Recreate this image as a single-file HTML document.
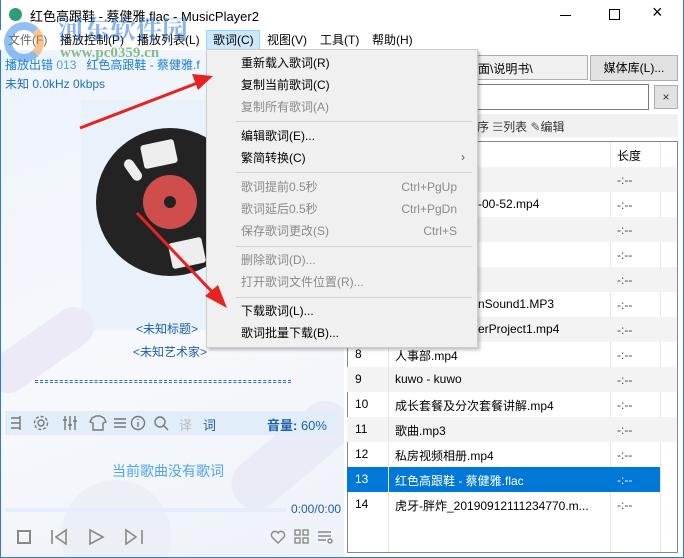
<!DOCTYPE html>
<html><head><meta charset="utf-8"><style>
*{margin:0;padding:0;box-sizing:border-box}
html,body{width:684px;height:558px;overflow:hidden}
body{position:relative;background:#fff;font-family:"Liberation Sans","Noto Sans CJK SC",sans-serif;font-size:12px;color:#000}
.a{position:absolute;white-space:nowrap}
.menu span{position:absolute;top:0;line-height:20px}
.row{position:absolute;left:347px;width:330px;height:25px}
.mi{position:absolute;left:241px;line-height:20px;font-size:12px}
.g{color:#8a8a8a}
.sc{position:absolute;right:227px;line-height:20px;color:#8a8a8a}
.sep{position:absolute;left:236px;width:236px;height:1px;background:#d4d4d4}
</style></head><body>
<div class="a" style="left:0;top:0;width:684px;height:558px;border:1px solid #2b7bd3;border-top:none"></div>
<div class="a" style="left:9px;top:8px;width:13px;height:13px;border-radius:50%;background:#2d9c7a"></div>
<div class="a" style="left:30px;top:6px;font-size:13px">红色高跟鞋 - 蔡健雅.flac - MusicPlayer2</div>
<div class="a" style="left:560px;top:15px;width:11px;height:1px;background:#000"></div>
<div class="a" style="left:609px;top:9px;width:11px;height:11px;border:1px solid #000"></div>
<div class="a" style="left:652px;top:2px;font-size:18px">×</div>
<div class="a menu" style="left:0;top:30px;width:683px;height:20px;background:#fff">
<span style="left:8px;color:#666">文件(F)</span><span style="left:60px">播放控制(P)</span><span style="left:137px">播放列表(L)</span>
<span style="left:206px;width:54px;height:20px;background:#cce8ff;border:1px solid #99d1ff;padding-left:6px;line-height:18px">歌词(C)</span>
<span style="left:267px">视图(V)</span><span style="left:320px">工具(T)</span><span style="left:372px">帮助(H)</span></div>
<div class="a" style="left:1px;top:50px;width:343px;height:507px;background:linear-gradient(160deg,#eef4fb,#f6f8fc 60%,#eef1f8);overflow:hidden">
<div class="a" style="left:80px;top:50px;width:200px;height:230px;background:#e9f2fb"></div>
<div class="a" style="left:-20px;top:280px;width:120px;height:40px;border-radius:20px;background:#ebeaf6;transform:rotate(-35deg)"></div>
<div class="a" style="left:220px;top:380px;width:140px;height:50px;border-radius:25px;background:#e9ecf6;transform:rotate(-40deg)"></div>
<div class="a" style="left:60px;top:430px;width:110px;height:110px;border-radius:50%;background:#eceff6"></div>
</div>
<div class="a" style="left:5px;top:56px;color:#1a7fd4">播放出错 <span style="color:#4aa3e8">013</span> &nbsp;&nbsp;红色高跟鞋 - 蔡健雅.f</div>
<div class="a" style="left:5px;top:75px;color:#1a6fc4">未知 0.0kHz 0kbps</div>
<div class="a" style="left:96px;top:128px;width:148px;height:148px;border-radius:50%;background:#232323"></div>
<div class="a" style="left:143px;top:175px;width:54px;height:54px;border-radius:50%;background:#cf4e4b"></div>
<div class="a" style="left:164px;top:196px;width:12px;height:12px;border-radius:50%;background:#232323"></div>
<div class="a" style="left:142px;top:142px;width:34px;height:24px;background:#eee;border-radius:3px;transform:rotate(-12deg)"></div>
<div class="a" style="left:128px;top:158px;width:10px;height:24px;background:#eee;border-radius:5px;transform:rotate(-35deg)"></div>
<div class="a" style="left:170px;top:240px;width:34px;height:26px;background:#eee;border-radius:3px;transform:rotate(-12deg)"></div>
<div class="a" style="left:136px;top:320px;color:#1a5fae">&lt;未知标题&gt;</div>
<div class="a" style="left:133px;top:343px;color:#1a5fae">&lt;未知艺术家&gt;</div>
<div class="a" style="left:35px;top:380px;width:256px;height:3px;border-top:1px dashed #2a6ed0;border-bottom:1px dashed #2a6ed0"></div>
<div class="a" style="left:5px;top:411px;width:333px;height:24px;background:#e1eefa"></div>
<svg class="a" style="left:8px;top:414px" width="170" height="18"><g fill="none" stroke="#777" stroke-width="1.4">
<path d="M3 4h9M3 9h9M3 14h9M12 2v14"/>
<circle cx="33" cy="9" r="3"/><circle cx="33" cy="9" r="6.5" stroke-dasharray="3 2"/>
<path d="M57 2v14M62 2v14M67 2v14M55 6h4M60 11h4M65 7h4"/>
<path d="M84 4l4-2h4l4 2 2 4-3 1v7h-10v-7l-3-1z"/>
<path d="M106 5h12M106 9h12M106 13h12"/>
<circle cx="130" cy="9" r="6.5"/><path d="M130 8v5M130 5v1"/>
<circle cx="152" cy="8" r="5"/><path d="M156 12l4 4"/></g></svg>
<div class="a" style="left:179px;top:415px;color:#bbb;font-size:13px">译</div>
<div class="a" style="left:203px;top:415px;color:#1a5fae;font-size:13px">词</div>
<div class="a" style="left:267px;top:415px;color:#1a5fae;font-size:13px"><b>音量:</b> 60%</div>
<div class="a" style="left:112px;top:461px;color:#4ea6ea;font-size:14px">当前歌曲没有歌词</div>
<div class="a" style="left:5px;top:508px;width:282px;height:4px;background:#e2eefa"></div>
<div class="a" style="left:291px;top:502px;color:#1a5fae">0:00/0:00</div>
<div class="a" style="left:17px;top:530px;width:14px;height:14px;border:2px solid #888"></div>
<svg class="a" style="left:50px;top:528px" width="100" height="18"><g fill="none" stroke="#888" stroke-width="1.6"><path d="M2 2v14M16 2L6 9l10 7z"/><path d="M40 2v14l13-7z"/><path d="M76 2v14l10-7zM92 2v14"/></g></svg>
<svg class="a" style="left:270px;top:529px" width="74" height="16"><g fill="none" stroke="#888" stroke-width="1.4"><path d="M8 14L2 8a3.5 3.5 0 0 1 6-4 3.5 3.5 0 0 1 6 4z"/><rect x="25" y="1" width="5" height="5"/><rect x="33" y="1" width="5" height="5"/><rect x="25" y="9" width="5" height="5"/><rect x="33" y="9" width="5" height="5"/><path d="M48 3h13M48 7h13M48 11h8"/><circle cx="60" cy="12" r="2"/></g></svg>
<div class="a" style="left:344px;top:50px;width:339px;height:507px;background:#fff"></div>
<div class="a" style="left:347px;top:55px;width:241px;height:25px;background:#f0f0f0;border:1px solid #adadad;padding:4px 0 0 130px">面\说明书\</div>
<div class="a" style="left:590px;top:55px;width:88px;height:26px;background:#e1e1e1;border:1px solid #adadad;text-align:center;line-height:24px">媒体库(L)...</div>
<div class="a" style="left:347px;top:84px;width:302px;height:26px;border:1px solid #7a7a7a"></div>
<div class="a" style="left:654px;top:85px;width:24px;height:24px;background:#e1e1e1;border:1px solid #adadad;text-align:center;line-height:22px;color:#333">×</div>
<div class="a" style="left:347px;top:114px;width:331px;height:23px;background:#f0f0f0"></div>
<div class="a" style="left:477px;top:118px;color:#333">序 <span style="color:#777">☰</span>列表 <span style="color:#555">✎</span>编辑</div>
<div class="a" style="left:347px;top:141px;width:331px;height:412px;border:1px solid #828790"></div>
<div class="a" style="left:610px;top:142px;width:1px;height:410px;background:#e5e5e5"></div>
<div class="a" style="left:660px;top:142px;width:1px;height:410px;background:#e5e5e5"></div>
<div class="a" style="left:617px;top:147px">长度</div>
<div class="row" style="top:167px;background:#f3f3f3"></div><div class="row" style="top:217px;background:#f3f3f3"></div><div class="row" style="top:267px;background:#f3f3f3"></div><div class="row" style="top:317px;background:#f3f3f3"></div><div class="row" style="top:367px;background:#f3f3f3"></div><div class="row" style="top:417px;background:#f3f3f3"></div>
<div class="row" style="top:467px;background:#0078d7;width:313px"></div>
<div class="a" style="left:478px;top:197px">-00-52.mp4</div>
<div class="a" style="left:478px;top:297px">nSound1.MP3</div>
<div class="a" style="left:478px;top:322px">erProject1.mp4</div>
<div class="a" style="left:355px;top:347px">8</div><div class="a" style="left:395px;top:347px">人事部.mp4</div>
<div class="a" style="left:355px;top:372px">9</div><div class="a" style="left:395px;top:372px">kuwo - kuwo</div>
<div class="a" style="left:355px;top:397px">10</div><div class="a" style="left:395px;top:397px">成长套餐及分次套餐讲解.mp4</div>
<div class="a" style="left:355px;top:422px">11</div><div class="a" style="left:395px;top:422px">歌曲.mp3</div>
<div class="a" style="left:355px;top:447px">12</div><div class="a" style="left:395px;top:447px">私房视频相册.mp4</div>
<div class="a" style="left:355px;top:472px;color:#fff">13</div><div class="a" style="left:395px;top:472px;color:#fff">红色高跟鞋 - 蔡健雅.flac</div>
<div class="a" style="left:355px;top:497px">14</div><div class="a" style="left:395px;top:497px">虎牙-胖炸_20190912111234770.m...</div>
<div class="a" style="left:388px;top:167px;width:1px;height:385px;background:#e5e5e5"></div>
<div class="a" style="left:617px;top:168px;line-height:25px;color:#444">-:--<br>-:--<br>-:--<br>-:--<br>-:--<br>-:--<br>-:--<br>-:--<br>-:--<br>-:--<br>-:--<br>-:--<br><span style="color:#fff">-:--</span><br>-:--</div>
<div class="a" style="left:206px;top:49px;width:272px;height:299px;background:#f0f0f0;border:1px solid #ccc;box-shadow:2px 2px 3px rgba(0,0,0,.25)"></div>
<div class="mi" style="top:53px">重新载入歌词(R)</div>
<div class="mi" style="top:75px">复制当前歌词(C)</div>
<div class="mi g" style="top:97px">复制所有歌词(A)</div>
<div class="sep" style="top:121px"></div>
<div class="mi" style="top:126px">编辑歌词(E)...</div>
<div class="mi" style="top:148px">繁简转换(C)</div><div class="a" style="left:461px;top:150px;color:#555">›</div>
<div class="sep" style="top:172px"></div>
<div class="mi g" style="top:177px">歌词提前0.5秒</div><div class="sc" style="top:177px">Ctrl+PgUp</div>
<div class="mi g" style="top:199px">歌词延后0.5秒</div><div class="sc" style="top:199px">Ctrl+PgDn</div>
<div class="mi g" style="top:221px">保存歌词更改(S)</div><div class="sc" style="top:221px">Ctrl+S</div>
<div class="sep" style="top:246px"></div>
<div class="mi g" style="top:250px">删除歌词(D)...</div>
<div class="mi g" style="top:272px">打开歌词文件位置(R)...</div>
<div class="sep" style="top:297px"></div>
<div class="mi" style="top:301px">下载歌词(L)...</div>
<div class="mi" style="top:323px">歌词批量下载(B)...</div>
<svg class="a" style="left:0;top:0" width="684" height="558"><g stroke="#e8231f" stroke-width="3" fill="#e8231f"><line x1="80" y1="128" x2="200" y2="82"/><polygon points="213,76 192,74 198,90" stroke="none"/><line x1="137" y1="213" x2="216" y2="296"/><polygon points="227,308 205,296 218,285" stroke="none"/></g></svg>
<div class="a" style="left:58px;top:10px;font-size:26px;font-weight:bold;color:rgba(40,120,220,.55);font-family:'Noto Serif CJK SC',serif">河东软件园</div>
<div class="a" style="left:60px;top:45px;font-size:15px;font-weight:bold;color:rgba(60,150,60,.6);font-family:'Liberation Serif',serif">www.pc0359.cn</div>
<div class="a" style="left:4px;top:22px;width:40px;height:40px;border-radius:50%;border:8px solid rgba(40,130,230,.5);border-right-color:rgba(240,140,40,.5)"></div>
</body></html>
